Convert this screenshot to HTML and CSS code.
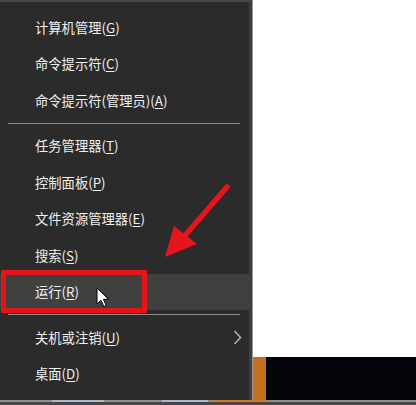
FILE: index.html
```html
<!DOCTYPE html>
<html lang="zh-CN">
<head>
<meta charset="utf-8">
<title>Win+X 菜单</title>
<link rel="stylesheet" href="styles.css">
</head>
<body>
<div class="screen">
  <div class="main">
    <nav class="menu">
      <div class="item">计算机管理(<u>G</u>)</div>
      <div class="item">命令提示符(<u>C</u>)</div>
      <div class="item">命令提示符(管理员)(<u>A</u>)</div>
      <div class="sep"></div>
      <div class="item">任务管理器(<u>T</u>)</div>
      <div class="item">控制面板(<u>P</u>)</div>
      <div class="item">文件资源管理器(<u>E</u>)</div>
      <div class="item">搜索(<u>S</u>)</div>
      <div class="item hover">运行(<u>R</u>)</div>
      <div class="sep"></div>
      <div class="item">关机或注销(<u>U</u>)
        <svg class="chev" width="9" height="15" viewBox="0 0 9 15"><path d="M1.5 1 L7.5 7.5 L1.5 14" fill="none" stroke="#b4b4b4" stroke-width="1.5"/></svg>
      </div>
      <div class="item">桌面(<u>D</u>)</div>
    </nav>
    <div class="right">
      <div class="white"></div>
      <div class="taskbar">
        <div class="orange"></div>
        <div class="black"></div>
      </div>
    </div>
  </div>
  <div class="strip">
    <div class="seg seg-a"></div>
    <div class="seg seg-b"></div>
    <div class="seg seg-c"></div>
    <div class="seg seg-d"></div>
    <div class="seg seg-e"></div>
    <div class="seg seg-f"></div>
  </div>

  <div class="redbox"></div>
  <svg class="arrow" width="80" height="90" viewBox="150 175 80 90">
    <line x1="227" y1="187" x2="182" y2="239" stroke="#e8141c" stroke-width="5.5" stroke-linecap="round"/>
    <polygon points="165,257 174,226 197,244" fill="#e8141c"/>
  </svg>
  <svg class="cursor" width="14" height="22" viewBox="0 0 14 22">
    <path d="M1 1 L1 17 L5 13.2 L7.8 19.6 L10.2 18.6 L7.5 12.3 L12.5 12.3 Z" fill="#ffffff" stroke="#000000" stroke-width="1" stroke-linejoin="round"/>
  </svg>
</div>
</body>
</html>
```

FILE: styles.css
```css
html, body {
  margin: 0;
  padding: 0;
  background: #2b2b2b;
}

.screen {
  position: relative;
  width: 416px;
  height: 405px;
  overflow: hidden;
  font-family: "Noto Sans CJK SC", "Noto Sans", sans-serif;
}

.main {
  display: flex;
  height: 400px;
}

.menu {
  width: 252px;
  height: 400px;
  box-sizing: border-box;
  background: #2b2b2b;
  border-top: 2px solid #474747;
  border-right: 3px solid #3d3d3d;
  padding-top: 7px;
  flex: none;
  display: flex;
  flex-direction: column;
}

.item {
  height: 36.5px;
  flex: none;
  display: flex;
  align-items: center;
  padding-left: 35px;
  padding-right: 7px;
  color: #f0f0f0;
  font-size: 13.3px;
}

.item u {
  text-decoration-thickness: 1px;
  text-underline-offset: 2px;
}

.item.hover {
  background: #404040;
}

.chev {
  margin-left: auto;
}

.sep {
  flex: none;
  height: 9px;
  display: flex;
  align-items: center;
  margin: 0 9px 0 8px;
}

.sep::before {
  content: "";
  display: block;
  flex: 1;
  height: 1px;
  background: #8c8c8c;
}

.right {
  flex: 1;
  display: flex;
  flex-direction: column;
  border-left: 1px solid #9a9a9a;
}

.white {
  height: 357px;
  background: #ffffff;
}

.taskbar {
  flex: 1;
  display: flex;
}

.orange {
  width: 13px;
  background: #c5701f;
}

.black {
  flex: 1;
  background: #03040a;
}

.strip {
  display: flex;
  height: 5px;
  background: #474747;
  border-top: 2px solid #8e8e8e;
  box-sizing: border-box;
}

.seg {
  height: 0;
}

.seg-a { width: 52px; }
.seg-b { width: 52px; margin-top: -2px; height: 2px; background: #a9b8c8; }
.seg-c { width: 58px; }
.seg-d { width: 46px; margin-top: -2px; height: 2px; background: #a9b8c8; }
.seg-e { width: 5px; }
.seg-f { width: 53px; margin-top: -2px; height: 2px; background: #d07a26; }

.redbox {
  position: absolute;
  left: 1px;
  top: 270px;
  width: 136px;
  height: 33px;
  border: 5px solid #e3151b;
  border-radius: 1px;
}

.arrow {
  position: absolute;
  left: 150px;
  top: 175px;
}

.cursor {
  position: absolute;
  left: 96px;
  top: 287px;
}
```
